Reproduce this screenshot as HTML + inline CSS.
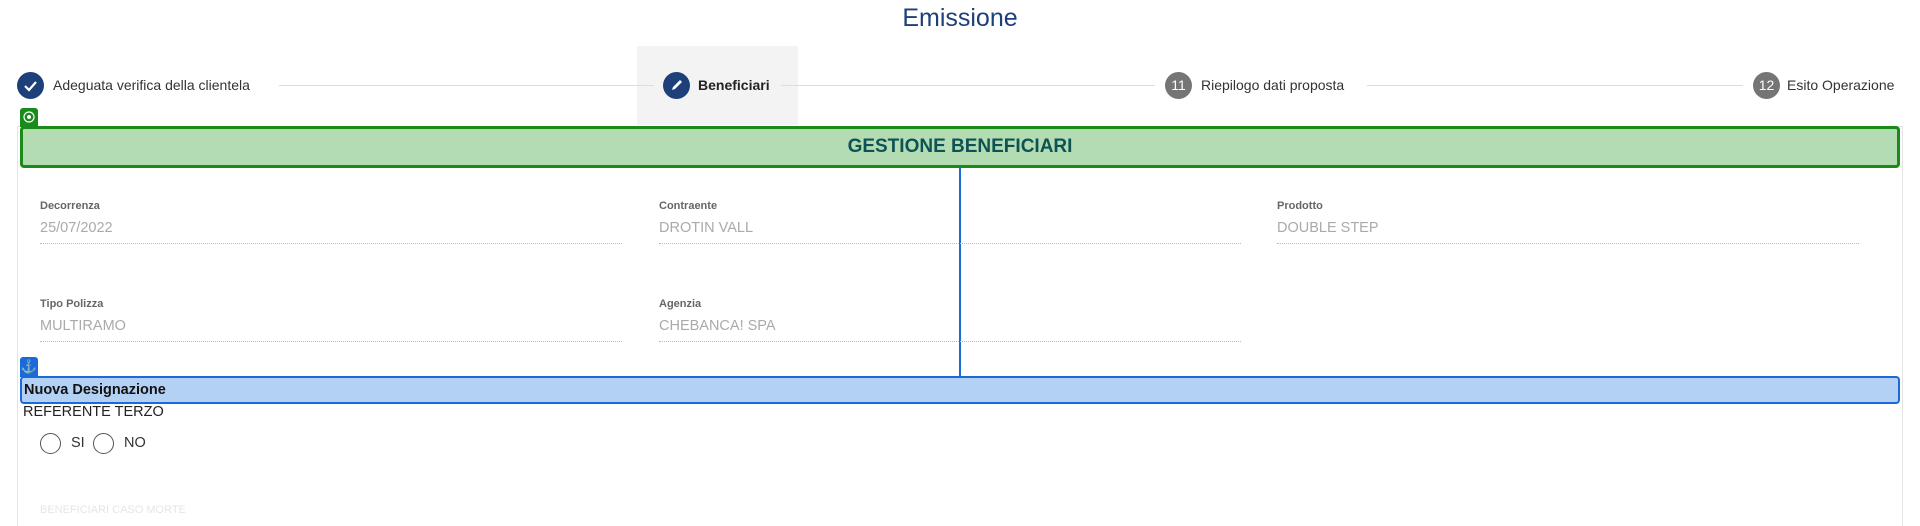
<!DOCTYPE html>
<html><head><meta charset="utf-8"><style>
*{box-sizing:border-box;margin:0;padding:0}
body{width:1920px;height:510px;overflow:hidden;background:#fff;font-family:"Liberation Sans",sans-serif;position:relative}
.a{position:absolute;white-space:nowrap}
.title{left:0;width:1920px;text-align:center;top:4px;font-size:25px;color:#1d3f7a}
.circ{width:27px;height:27px;border-radius:50%;color:#fff;font-size:14px;text-align:center;line-height:27px;top:72px}
.lbl{font-size:14px;color:#333;top:77px}
.line{height:1px;background:#ddd;top:85px}
.fl{font-size:11px;font-weight:bold;color:#666}
.fv{font-size:14.5px;color:#aaa}
.dot{border-top:1px dotted #bbb;height:0}
</style></head><body>
<div class="a title">Emissione</div>
<div class="a" style="left:637px;top:46px;width:161px;height:79px;background:#f3f3f3"></div>
<div class="a circ" style="left:17px;background:#1d3f7a"><svg width="27" height="27" viewBox="0 0 27 27"><path d="M8 14l4 4 7-8" stroke="#fff" stroke-width="2.2" fill="none"/></svg></div>
<div class="a lbl" style="left:53px">Adeguata verifica della clientela</div>
<div class="a line" style="left:279px;width:375px"></div>
<div class="a circ" style="left:663px;background:#1d3f7a"><svg width="27" height="27" viewBox="0 0 27 27"><path d="M9 18l1-3 7-7 2 2-7 7z" fill="#fff"/></svg></div>
<div class="a lbl" style="left:698px;font-weight:bold;color:#222">Beneficiari</div>
<div class="a line" style="left:781px;width:374px"></div>
<div class="a circ" style="left:1165px;background:#757575">11</div>
<div class="a lbl" style="left:1201px">Riepilogo dati proposta</div>
<div class="a line" style="left:1367px;width:376px"></div>
<div class="a circ" style="left:1753px;background:#757575">12</div>
<div class="a lbl" style="left:1787px">Esito Operazione</div>

<div class="a" style="left:17px;top:126px;width:1886px;height:400px;border:1px solid #e4e4e4;border-bottom:none"></div>
<div class="a" style="left:20px;top:108px;width:18px;height:19px;background:#1a8a1a;border-radius:3px 3px 0 0"><svg width="18" height="18" viewBox="0 0 18 18"><circle cx="9" cy="9" r="5" stroke="#fff" fill="none" stroke-width="1.2"/><circle cx="9" cy="9" r="2" fill="#fff"/></svg></div>
<div class="a" style="left:20px;top:126px;width:1880px;height:42px;background:#b3dcb3;border:3px solid #1a8a1a;border-radius:4px;text-align:center;line-height:36px;font-size:19px;font-weight:bold;color:#0d5356">GESTIONE BENEFICIARI</div>
<div class="a" style="left:959px;top:168px;width:2px;height:208px;background:#1a6ad8"></div>

<div class="a fl" style="left:40px;top:200px">Decorrenza</div>
<div class="a fv" style="left:40px;top:220px">25/07/2022</div>
<div class="a dot" style="left:40px;top:243px;width:582px"></div>
<div class="a fl" style="left:659px;top:200px">Contraente</div>
<div class="a fv" style="left:659px;top:220px">DROTIN VALL</div>
<div class="a dot" style="left:659px;top:243px;width:582px"></div>
<div class="a fl" style="left:1277px;top:200px">Prodotto</div>
<div class="a fv" style="left:1277px;top:220px">DOUBLE STEP</div>
<div class="a dot" style="left:1277px;top:243px;width:582px"></div>
<div class="a fl" style="left:40px;top:298px">Tipo Polizza</div>
<div class="a fv" style="left:40px;top:318px">MULTIRAMO</div>
<div class="a dot" style="left:40px;top:341px;width:582px"></div>
<div class="a fl" style="left:659px;top:298px">Agenzia</div>
<div class="a fv" style="left:659px;top:318px">CHEBANCA! SPA</div>
<div class="a dot" style="left:659px;top:341px;width:582px"></div>

<div class="a" style="left:20px;top:357px;width:18px;height:20px;background:#1a6ad8;border-radius:3px 3px 0 0;color:#fff;font-size:13px;text-align:center;line-height:20px">⚓</div>
<div class="a" style="left:20px;top:376px;width:1880px;height:28px;background:#b3d1f5;border:2px solid #1a6ad8;border-radius:4px;font-size:14.5px;font-weight:bold;color:#111;line-height:24px;padding-left:2px">Nuova Designazione</div>
<div class="a" style="left:23px;top:404px;font-size:14.5px;color:#222">REFERENTE TERZO</div>
<div class="a" style="left:40px;top:433px;width:21px;height:21px;border:1.5px solid #555;border-radius:50%"></div>
<div class="a" style="left:71px;top:435px;font-size:14.5px;color:#333">SI</div>
<div class="a" style="left:93px;top:433px;width:21px;height:21px;border:1.5px solid #555;border-radius:50%"></div>
<div class="a" style="left:124px;top:435px;font-size:14.5px;color:#333">NO</div>
<div class="a" style="left:40px;top:504px;font-size:11px;color:#e6e6e6">BENEFICIARI CASO MORTE</div>
</body></html>
